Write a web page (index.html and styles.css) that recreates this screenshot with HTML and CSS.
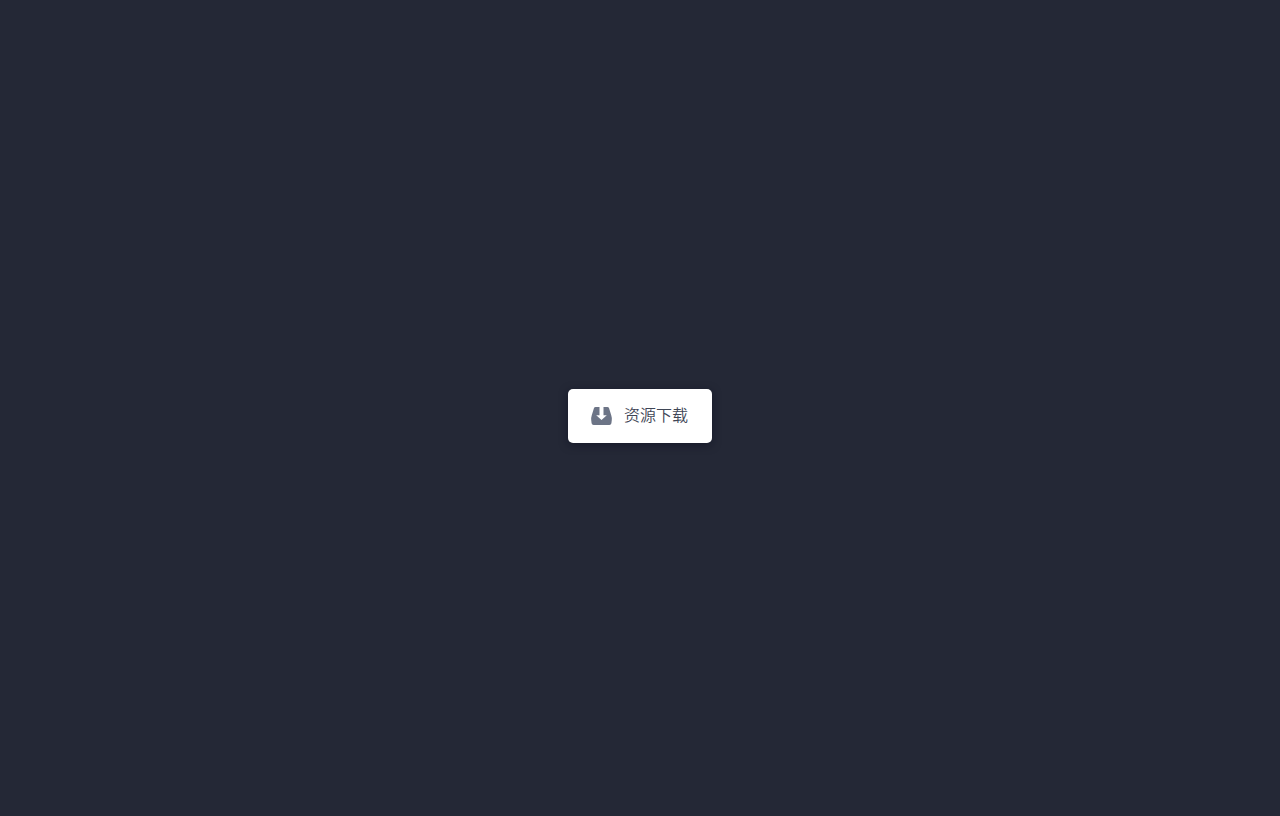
FILE: index.html
```html
<!DOCTYPE html>
<html lang="zh-CN">
<head>
  <meta charset="UTF-8">
  <meta name="viewport" content="width=device-width, initial-scale=1.0">
  <title>资源下载</title>
  <link rel="stylesheet" href="styles.css">
</head>
<body>

  <button class="button" type="button">
    <svg class="icon" viewBox="0 0 21 18" aria-hidden="true">
      <path d="M4.6 0H8.5V8.2H5.2L10.5 13L15.8 8.2H12.5V0H16.4Q17.6 0 18 1.1L20.3 8.6Q21 10.8 20.8 13L20.4 16.2Q20.1 18 18.4 18H2.6Q.9 18 .6 16.2L.2 13Q0 10.8 .7 8.6L3 1.1Q3.4 0 4.6 0Z"/>
    </svg>
    <span>资源下载</span>
  </button>

</body>
</html>
```

FILE: styles.css
```css
body {
  box-sizing: border-box;
  margin: 0;
  padding-top: 16px;
  min-height: 100vh;
  display: flex;
  justify-content: center;
  align-items: center;
  background: #242836;
  font-family: "Liberation Sans", "Noto Sans CJK SC", sans-serif;
}

.button {
  display: flex;
  align-items: center;
  gap: 12px;
  padding: 15px 24px 15px 23px;
  border: none;
  border-radius: 5px;
  background: #fff;
  color: #3f4656;
  font-family: inherit;
  font-size: 16px;
  font-weight: 350;
  line-height: 24px;
  cursor: pointer;
  box-shadow: 0 2px 8px rgba(10, 12, 30, .5);
}

.button:hover {
  box-shadow: 0 4px 20px rgba(10, 12, 30, .6);
}

.icon {
  width: 21px;
  height: 18px;
  fill: #6c7486;
}
```
